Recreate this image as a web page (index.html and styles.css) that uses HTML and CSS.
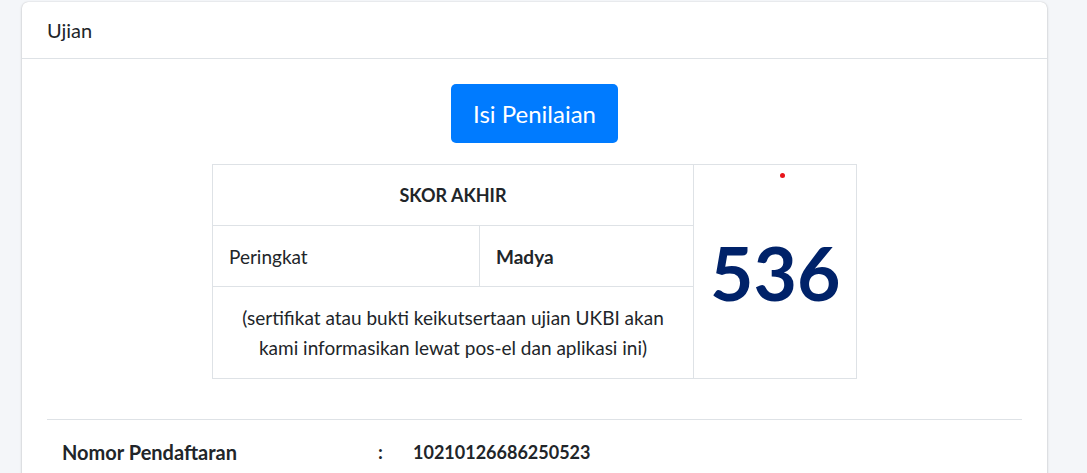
FILE: index.html
```html
<!DOCTYPE html>
<html lang="id">
<head>
<meta charset="utf-8">
<title>Ujian</title>
<link rel="stylesheet" href="styles.css">
</head>
<body>
<div class="card">
  <div class="card-header">Ujian</div>
  <div class="card-body">
    <div class="btn-row"><button class="btn">Isi Penilaian</button></div>
    <table class="score">
      <colgroup>
        <col class="c1">
        <col class="c2">
        <col class="c3">
      </colgroup>
      <tr>
        <th colspan="2" class="title">SKOR AKHIR</th>
        <td rowspan="3" class="big"><span class="dot"></span>536</td>
      </tr>
      <tr>
        <td class="label">Peringkat</td>
        <td class="value">Madya</td>
      </tr>
      <tr>
        <td colspan="2" class="note">(sertifikat atau bukti keikutsertaan ujian UKBI akan<br>kami informasikan lewat pos-el dan aplikasi ini)</td>
      </tr>
    </table>
    <hr class="sep">
    <div class="info-row">
      <div class="info-label">Nomor Pendaftaran</div>
      <div class="info-colon">:</div>
      <div class="info-value">10210126686250523</div>
    </div>
  </div>
</div>
</body>
</html>
```
FILE: styles.css
```css
* { box-sizing: border-box; }
html, body { margin: 0; padding: 0; }
body {
  background: #f4f6f9;
  font-family: Lato, "Open Sans", sans-serif;
  color: #212529;
  font-size: 19px;
  height: 473px;
  overflow: hidden;
}
.card {
  margin: 2px 0 0 22px;
  width: 1025px;
  background: #fff;
  border-radius: 6px;
  box-shadow: 0 0 1px rgba(0,0,0,.2), 0 1px 3px rgba(0,0,0,.2);
}
.card-header {
  height: 57px;
  padding: 0 25px;
  display: flex;
  align-items: center;
  font-size: 20px;
  border-bottom: 1px solid #dee2e6;
}
.card-body {
  padding: 25px 25px 40px;
}
.btn-row { display: flex; justify-content: center; }
.btn {
  background: #007bff;
  color: #fff;
  border: none;
  border-radius: 5px;
  width: 167px;
  height: 59px;
  font-family: inherit;
  font-size: 24px;
  padding: 0;
}
.score {
  margin: 21px auto 0;
  width: 645px;
  border-collapse: collapse;
  table-layout: fixed;
}
.c1 { width: 267px; }
.c2 { width: 214px; }
.c3 { width: 163px; }
.score td, .score th {
  border: 1px solid #dee2e6;
  padding: 0 16px;
}
.title {
  height: 61px;
  font-weight: 700;
  font-size: 18px;
  text-align: center;
}
.label { height: 61px; }
.value { font-weight: 700; }
.note {
  height: 92px;
  text-align: center;
  line-height: 30px;
  padding: 0 8px;
}
.big {
  position: relative;
  text-align: center;
  font-size: 75px;
  font-weight: 700;
  color: #002269;
  padding: 0;
}
.dot {
  position: absolute;
  top: 8px;
  left: 86px;
  width: 5px;
  height: 5px;
  border-radius: 50%;
  background: #e8141a;
}
.sep {
  margin: 40px 0 0;
  border: 0;
  border-top: 1px solid #dee2e6;
}
.info-row {
  display: flex;
  align-items: center;
  height: 63px;
  padding-left: 15px;
  font-weight: 700;
}
.info-label { width: 316px; font-size: 20px; }
.info-colon { width: 35px; }
.info-value { font-size: 18px; }
```
